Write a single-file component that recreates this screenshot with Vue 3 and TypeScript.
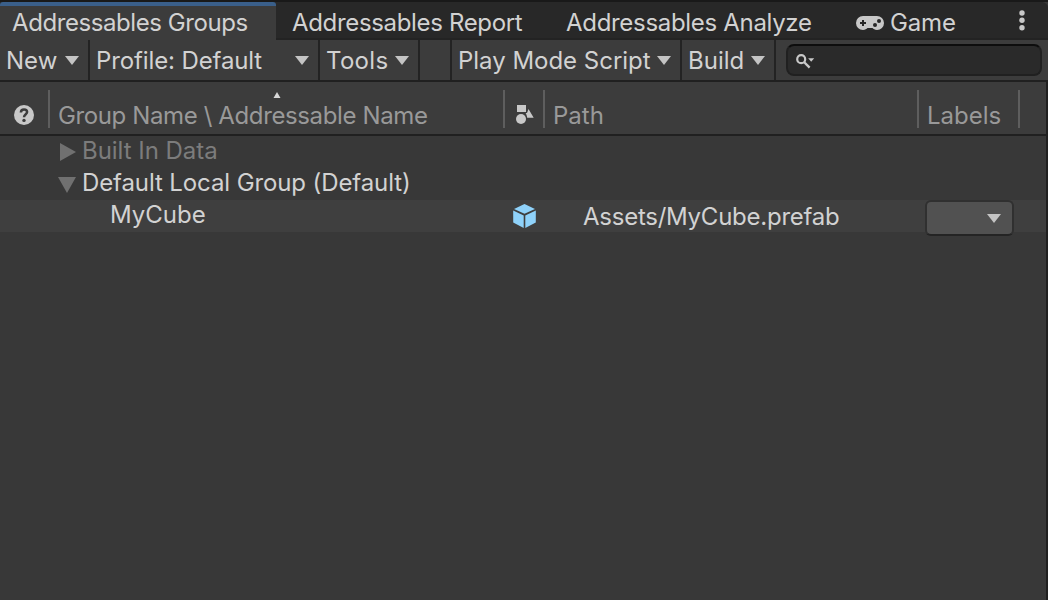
<script setup lang="ts">
interface ToolItem { label: string; cls: string; arrow: boolean }

const tabs: string[] = ['Addressables Groups', 'Addressables Report', 'Addressables Analyze']
const tools: ToolItem[] = [
  { label: 'New', cls: 'new', arrow: true },
  { label: 'Profile: Default', cls: 'profile', arrow: true },
  { label: 'Tools', cls: 'tools', arrow: true },
  { label: '', cls: 'spacer', arrow: false },
  { label: 'Play Mode Script', cls: 'play', arrow: true },
  { label: 'Build', cls: 'build', arrow: true },
]
</script>

<template>
  <div class="window">
    <nav class="tabs">
      <div v-for="(tab, i) in tabs" :key="tab" class="tab" :class="['tab-' + i, { active: i === 0 }]">
        <span>{{ tab }}</span>
      </div>
      <div class="tab game">
        <svg width="28" height="14" viewBox="0 0 28 14">
          <path fill="#c8c8c8" d="M7 0H21A7 7 0 0 1 21 14C18.6 14 17.6 12.9 16.5 12H11.5C10.4 12.9 9.4 14 7 14A7 7 0 0 1 7 0Z" />
          <path fill="#282828" d="M6 4h2v2h2v2H8v2H6V8H4V6h2z" />
          <circle cx="23" cy="5" r="2" fill="#282828" />
          <circle cx="19" cy="9" r="2" fill="#282828" />
        </svg>
        <span>Game</span>
      </div>
      <svg class="kebab" width="6" height="22" viewBox="0 0 6 22">
        <circle cx="3" cy="3" r="2.7" /><circle cx="3" cy="10.3" r="2.7" /><circle cx="3" cy="17.7" r="2.7" />
      </svg>
    </nav>

    <div class="toolbar">
      <div v-for="t in tools" :key="t.cls" class="tool" :class="t.cls">
        <span>{{ t.label }}</span>
        <svg v-if="t.arrow" class="arrow" width="14" height="9" viewBox="0 0 14 9"><path d="M0 0H14L7 9Z" /></svg>
      </div>
      <div class="search">
        <svg width="20" height="16" viewBox="0 0 20 16">
          <circle cx="5.2" cy="5.2" r="4" fill="none" stroke="#c8c8c8" stroke-width="2.2" />
          <path d="M8 8L13.6 13.6" stroke="#c8c8c8" stroke-width="2.4" />
          <path d="M12.2 4.2H18.2L15.2 7.8Z" fill="#c8c8c8" />
        </svg>
      </div>
    </div>

    <div class="panel">
      <div class="head grid">
        <div class="cell help">
          <svg width="20" height="20" viewBox="0 0 20 20">
            <circle cx="10" cy="10" r="10" fill="#c8c8c8" />
            <path d="M6.9 7.4C6.9 5.4 8.2 4.4 10 4.4S13.1 5.5 13.1 7.1C13.1 9.2 10 9.3 10 12.3" fill="none" stroke="#3c3c3c" stroke-width="2.5" />
            <circle cx="10" cy="15.4" r="1.7" fill="#3c3c3c" />
          </svg>
        </div>
        <div class="cell name">
          <svg class="sort" width="8" height="6" viewBox="0 0 8 6"><path d="M4 0L7.5 6H.5Z" fill="#d8d8d8" /></svg>
          <span>Group Name \ Addressable Name</span>
        </div>
        <div class="cell type">
          <svg width="18" height="20" viewBox="0 0 18 20">
            <path fill="#c8c8c8" d="M1 0h9v7H1z" />
            <circle cx="5" cy="14" r="5" fill="#c8c8c8" />
            <path fill="#c8c8c8" d="M12.5 4L17.7 12.8H11.2C11 10.8 10.4 9.5 9.6 8H11z" />
          </svg>
        </div>
        <div class="cell path"><span>Path</span></div>
        <div class="cell labels"><span>Labels</span></div>
      </div>

      <div class="row group dim">
        <svg width="16" height="18" viewBox="0 0 16 18"><path d="M0 0L16 9L0 18Z" /></svg>
        <span>Built In Data</span>
      </div>
      <div class="row group open">
        <svg width="18" height="16" viewBox="0 0 18 16"><path d="M0 0H18L9 16Z" /></svg>
        <span>Default Local Group (Default)</span>
      </div>
      <div class="row grid entry">
        <div />
        <div class="asset"><span>MyCube</span></div>
        <div class="cube">
          <svg width="24" height="24" viewBox="0 0 24 24" fill="#8fd2fa">
            <path d="M11.5 0L22 5L11.5 9.8L1 5Z" />
            <path d="M.2 6.6L10.7 11.5V24L.2 18.6Z" />
            <path d="M22.8 6.6L12.3 11.5V24L22.8 18.6Z" />
          </svg>
        </div>
        <div class="asset-path"><span>Assets/MyCube.prefab</span></div>
        <div class="label-cell">
          <button class="dropdown">
            <svg class="arrow" width="14" height="9" viewBox="0 0 14 9"><path d="M0 0H14L7 9Z" /></svg>
          </button>
        </div>
      </div>
    </div>
  </div>
</template>

<style>
body { margin: 0; background: #383838; }
</style>

<style scoped>
.window {
  width: 1048px; height: 600px; box-sizing: border-box; overflow: hidden;
  display: flex; flex-direction: column;
  background: #383838; color: #d2d2d2; border-top: 2px solid #191919;
  font: 400 24px/32px Inter, "Liberation Sans", sans-serif;
  white-space: nowrap;
}
svg { display: block; flex: none; }
.arrow { fill: #c4c4c4; }
.tabs { height: 38px; flex: none; display: flex; background: #282828; border-radius: 0 6px 0 0; box-shadow: inset 0 -2px #232323; }
.tab { box-sizing: border-box; display: flex; padding-top: 5px; }
.tab-0 { width: 276px; padding-left: 12px; letter-spacing: -0.42px; }
.tab-1 { width: 275px; padding-left: 16px; letter-spacing: -0.34px; }
.tab-2 { width: 290px; padding-left: 15px; letter-spacing: -0.31px; }
.tab.active { background: #3c3c3c; border-top: 4px solid #3a5f8a; padding-top: 1px; border-radius: 3px 3px 0 0; }
.game { padding-left: 15px; gap: 6px; width: 160px; letter-spacing: -0.15px; }
.game svg { margin-top: 9px; }
.kebab { margin: 8px 0 0 18px; fill: #c8c8c8; }
.toolbar { height: 42px; flex: none; box-sizing: border-box; display: flex; background: #3c3c3c; border-bottom: 2px solid #202020; }
.tool { box-sizing: border-box; display: flex; justify-content: space-between; border-right: 2px solid #232323; padding: 5px 9px 0 6px; }
.tool .arrow { margin-top: 11px; }
.new { width: 90px; }
.profile { width: 230px; letter-spacing: -0.12px; }
.tools { width: 100px; letter-spacing: 0.3px; }
.spacer { width: 32px; }
.play { width: 230px; letter-spacing: -0.02px; }
.build { width: 94px; }
.search { box-sizing: border-box; width: 256px; height: 32px; margin: 4px 0 0 10px; padding: 8px 0 0 8px; background: #2a2a2a; border: 2px solid #202020; border-top-color: #0d0d0d; border-radius: 8px; }
.panel { flex: 1; border-right: 2px solid #202020; }
.grid { display: grid; grid-template-columns: 50px 455px 40px 374px 101px 26px; }
.head { height: 54px; box-sizing: border-box; background: #3c3c3c; border-bottom: 2px solid #202020; color: #999; }
.cell { height: 38px; margin-top: 8px; box-sizing: border-box; border-right: 2px solid #5e5e5e; display: flex; }
.cell span { margin-top: 10px; }
.help { padding: 15px 0 0 14px; }
.name { flex-direction: column; padding-left: 8px; letter-spacing: -0.38px; }
.sort { margin: 2px 0 0 215px; }
.name .sort + span { margin-top: 2px; }
.type { padding: 15px 0 0 11px; }
.path, .labels { padding-left: 8px; }
.row { height: 32px; }
.group { display: flex; gap: 6px; }
.group svg { fill: #707070; }
.dim { color: #7c7c7c; padding-left: 60px; letter-spacing: -0.03px; }
.dim svg { margin-top: 7px; }
.dim span { margin-top: -1px; }
.open { padding-left: 58px; letter-spacing: -0.11px; }
.open svg { margin-top: 9px; }
.open span { margin-top: -1px; }
.entry { background: #3f3f3f; }
.asset { padding-left: 60px; margin-top: -1px; }
.cube { padding: 4px 0 0 8px; }
.asset-path { padding: 1px 0 0 38px; letter-spacing: -0.25px; }
.label-cell { padding: 0 0 0 6px; }
.dropdown { display: flex; justify-content: flex-end; align-items: flex-start; width: 89px; height: 36px; margin: 0; padding: 12px 11px 0 0; box-sizing: border-box; background: #515151; border: 2px solid #303030; border-bottom-color: #242424; border-radius: 6px; }
</style>
